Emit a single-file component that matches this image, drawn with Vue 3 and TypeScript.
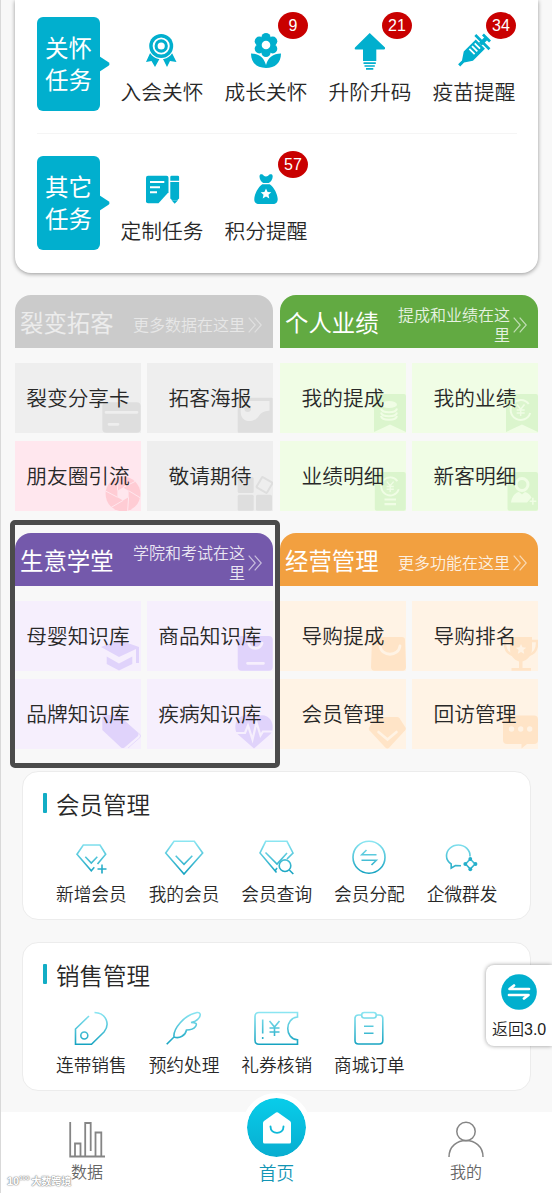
<script setup lang="ts">
interface Task { label: string; icon: string; badge?: number }
interface TaskRow { tag: [string, string]; tasks: Task[] }
interface Cell { label: string; icon: string; pink?: boolean }
interface Group { title: string; sub: string; theme: string; cells: Cell[] }
interface Section { title: string; items: { label: string; icon: string }[] }

const taskRows: TaskRow[] = [
  {
    tag: ['关怀', '任务'],
    tasks: [
      {
        label: '入会关怀',
        icon: '<path d="M11 21 6 32l5.500-1L15 37l5-9h2.500l4.500 9 3-6 6.500 1L31 21z"/><circle cx="21.200" cy="16" r="13.200" fill="#fff"/><circle cx="21.200" cy="16" r="12"/><circle cx="21.200" cy="16" r="7.600" fill="none" stroke="#fff" stroke-width="1.900"/><circle cx="21.200" cy="16" r="3.600" fill="#fff"/>',
      },
      {
        label: '成长关怀',
        badge: 9,
        icon: '<circle cx="22" cy="7.500" r="4.600"/><circle cx="28.700" cy="11.200" r="4.600"/><circle cx="28.700" cy="18.800" r="4.600"/><circle cx="22" cy="22.500" r="4.600"/><circle cx="15.300" cy="18.800" r="4.600"/><circle cx="15.300" cy="11.200" r="4.600"/><circle cx="22" cy="15" r="7"/><circle cx="22" cy="15" r="4.300" fill="#fff"/><path d="M7 23.500c8 0 13 4 15 11.500 2-7.500 7-11.500 15-11.500C37 33 31 38 22 38S7 33 7 23.500z"/>',
      },
      {
        label: '升阶升码',
        badge: 21,
        icon: '<path d="M21.700 3 37 17.500q.5 2-1 2h-7.700V31H15V19.500H7.500q-1.500-.2-.5-2z"/><path d="M15.500 32.300h12.300v1.700H15.500zM16.500 35.300h10.300v1.500H16.500zM18 38h7.300v1.700H18z"/>',
      },
      {
        label: '疫苗提醒',
        badge: 34,
        icon: '<g transform="translate(21.300 21.200) rotate(45)"><path d="M-6.500-10h13V7L1.500 14.500V20h-3v-5.500L-6.500 7z"/><path d="M-10-14.200h20v2.700h-20zM-2-18h4v8h-4zM-5-20H5v2.700H-5z"/><path d="M-4.500-6.500h7.500M-4.500-2.700h7.500M-4.500 1.100h7.500" stroke="#fff" stroke-width="1.800"/></g>',
      },
    ],
  },
  {
    tag: ['其它', '任务'],
    tasks: [
      {
        label: '定制任务',
        icon: '<path d="M8 6.700h18.500q2 0 2 2v14.600L18.500 34.300H8q-2 0-2-2V8.700q0-2 2-2z"/><path d="M10 13h14.300M10 18.300h10M10 23.300h7" stroke="#fff" stroke-width="2"/><path d="M30.300 8q0-1.300 1.300-1.300h6.200q1.300 0 1.300 1.300v3.700h-8.800zM30.300 13h8.800v16.500l-1.600 1.600h-5.600l-1.600-1.600zM31.500 31.300h6.500l-3.300 3.500z"/>',
      },
      {
        label: '积分提醒',
        badge: 57,
        icon: '<path d="M15.500 7.500c0-3 3-2.500 4.300-.8 1.200 1 3 1 4.400 0 1.300-1.700 4.600-2.200 4.500.8 0 3-2 5.300-4 6.500h-5.400c-2-1.200-3.800-3.500-3.800-6.500z"/><path d="M18.300 15.300h7.400C30 18.300 33.500 25 33.700 30c.1 3-1.700 5-4.700 5H15c-3 0-4.900-2-4.700-5 .2-5 3.700-11.700 8-14.700z"/><path d="m22 19.500 1.600 3.400 3.700.4-2.800 2.500.8 3.700-3.300-1.900-3.300 1.900.8-3.700-2.800-2.500 3.700-.4z" fill="#fff"/>',
      },
    ],
  },
]

const ribbon = '<path d="M13.500 5H42q2 0 2 2v36L28 35.500 12 43V7q0-2 1.500-2z"/>'
const yen = (x: number, y: number, s: number) =>
  `<g transform="translate(${x} ${y}) scale(${s})" fill="none" stroke="var(--cell)" stroke-width="2"><path d="M8-6A10 10 0 1 0 9.500 3M8 6.500"/><path d="M-3.800-5.500 0-.8l3.800-4.700M0-.8V6M-4 0h8M-4 3h8" stroke-width="1.500"/></g>`

const groups: Group[] = [
  {
    title: '裂变拓客', sub: '更多数据在这里', theme: 'gray',
    cells: [
      { label: '裂变分享卡', icon: '<rect x="5.300" y="13.300" width="38.400" height="30.400" rx="4"/><path d="M9 23.300h31M12 35.300h9" stroke="var(--cell)" stroke-width="2.800" stroke-linecap="round"/>' },
      { label: '拓客海报', icon: '<rect x="8.700" y="8.700" width="35" height="35" rx="1"/><path d="M14 12h26.500v9.500c-7 1-8.500 2.500-11 6-3 4.500-11 6.500-15.500 2-3.500-4-2-9.500-2-15.500q0-2 2-2z" fill="var(--cell)"/><circle cx="18.700" cy="19.500" r="3.400"/>' },
      { label: '朋友圈引流', pink: true, icon: '<circle cx="26" cy="27" r="17.400"/><path d="m26 20.500 5.600 3.200v6.500L26 33.500l-5.600-3.300v-6.500z" fill="var(--cell)"/><path d="m26 20.500 12-6M31.600 23.700l11.500 7M31.600 30.200l-1 14M26 33.500l-12 7M20.400 30.200l-11.500-6M20.400 23.700l.8-14" stroke="var(--cell)" stroke-width="1"/>' },
      { label: '敬请期待', icon: '<rect x="8.700" y="10" width="16" height="16" rx="1.500"/><rect x="8.700" y="27.800" width="16" height="16" rx="1.500"/><rect x="27" y="27.800" width="16" height="16" rx="1.500"/><rect x="29.500" y="12" width="12" height="12" rx="1" fill="none" stroke="currentColor" stroke-width="2" transform="rotate(30 35.500 18)"/>' },
    ],
  },
  {
    title: '个人业绩', sub: '提成和业绩在这里', theme: 'green',
    cells: [
      { label: '我的提成', icon: ribbon + '<ellipse cx="27" cy="15.500" rx="8" ry="3.600" fill="var(--cell)"/><path d="M19 19.500c1 5 15 5 16 0M19 23.500c1 5 15 5 16 0M19 27c1 5 15 5 16 0" fill="none" stroke="var(--cell)" stroke-width="2"/>' },
      { label: '我的业绩', icon: ribbon + yen(26.7, 21, 1) },
      { label: '业绩明细', icon: '<rect x="12.800" y="5" width="31" height="38.700" rx="2"/>' + yen(28.2, 19.5, 0.9) + '<path d="M22.500 32.500h11.500M22.500 37.200h11.500" stroke="var(--cell)" stroke-width="2.200"/>' },
      { label: '新客明细', icon: '<rect x="13.500" y="5" width="30.500" height="38.700" rx="2"/><circle cx="28" cy="17.500" r="6" fill="none" stroke="var(--cell)" stroke-width="3"/><path d="M17 35.500c1-7 5-10 8-10.500l3 2.500 3-2.500c3 .7 5 2.500 6.500 5.500l-4.500 5zM35.700 33.500h2.400v-2.800h1.500v2.800h2.700V35h-2.700v2.700h-1.500V35h-2.400z" fill="var(--cell)"/>' },
    ],
  },
  {
    title: '生意学堂', sub: '学院和考试在这里', theme: 'purple',
    cells: [
      { label: '母婴知识库', icon: '<path d="m4 20 18-7 20 7v16h-3V22L22 30zM9.700 29.500 22 36.500l13.300-7v7.500L22 43.500 9.700 37z"/>' },
      { label: '商品知识库', icon: '<rect x="8.700" y="9" width="35" height="34.700" rx="4"/><path d="M19.500 16a7 7 0 0 0 13.600 0M18.500 36.300h16" fill="none" stroke="var(--cell)" stroke-width="2.700" stroke-linecap="round"/>' },
      { label: '品牌知识库', icon: '<path d="M7 10h14.500L41 28q1 1.500 0 3L27.500 42.500q-1.800 1-3.500 0L5.300 25V12q0-2 1.700-2z"/><path d="M29 17.500 43 29.500q1 1.500 0 3L31 43" fill="none" stroke="currentColor" stroke-width=".7"/>' },
      { label: '疾病知识库', icon: '<path d="M25 43.500 8.500 29C5 25 5.500 15 12 11.500c5-2.500 10-.5 13 2.500 3-3 8-5 13-2.500C44.500 15 45 25 41.500 29z"/><path d="M7 28h9l3-7.500 4.500 14 4-17 4 13 2.500-4H43" fill="none" stroke="var(--cell)" stroke-width="2.200"/>' },
    ],
  },
  {
    title: '经营管理', sub: '更多功能在这里', theme: 'orange',
    cells: [
      { label: '导购提成', icon: '<path d="M13 10h27q3 0 3 3l1 27q0 3.700-3.500 3.700h-28Q9 43.700 9 40l1-27q0-3 3-3z"/><path d="M18 19c1.500 11 18.500 11 20 0" fill="none" stroke="var(--cell)" stroke-width="2.800" stroke-linecap="round"/>' },
      { label: '导购排名', icon: '<path d="M16 10h22v12c0 7-5 11-9.500 12.500V41H37v2.700H17.500V41H25v-6.500C20.500 33 16 29 16 22z"/><path d="M17 14h-6c-.5 7 2 12.500 8 14M37 14h6c.5 7-2 12.500-8 14" fill="none" stroke="currentColor" stroke-width="2.500"/><path d="m27 17 1.500 3.300 3.700.4-2.800 2.400.8 3.600-3.200-1.800-3.200 1.800.8-3.600-2.800-2.400 3.700-.4z" fill="var(--cell)"/>' },
      { label: '会员管理', icon: '<path d="M15 12h20q1.500 0 2.500 1.200l6 9.300q.7 1.500-.3 2.800L27.300 42.500q-2 1.800-4 0L7.300 25.300q-1-1.300-.2-2.800l5.500-9.300Q13.500 12 15 12z"/><path d="m16.500 27 9 7.500 9-7.500" fill="none" stroke="var(--cell)" stroke-width="2.600" stroke-linecap="round"/>' },
      { label: '回访管理', icon: '<path d="M13 10.500h27q4 0 4 4V35q0 4-4 4h-7l-5.500 4.500V39H13q-4 0-4-4V14.500q0-4 4-4z"/><g fill="var(--cell)"><circle cx="17.500" cy="24" r="2.700"/><circle cx="26.700" cy="24" r="2.700"/><circle cx="35.700" cy="24" r="2.700"/></g>' },
    ],
  },
]

const sections: Section[] = [
  {
    title: '会员管理',
    items: [
      { label: '新增会员', icon: '<path d="M26.500 27 34.700 17.300 29 8H12.300L6 17.300l14.300 16.500 3-3.500M14.300 19.700l6 6.300 6-6.300M31 27.500v9M26.500 32h9"/>' },
      { label: '我的会员', icon: '<path d="M10 4.300h20.300L38.700 16 20 37 1.700 16zM11.700 18.700l8.300 8.600 8.300-8.600"/>' },
      { label: '会员查询', icon: '<path d="m30 22 6-6-6-11.700H8.700L3 16l16.500 19.500M8.500 15.500 20 27l10-11M20 31l-2 3"/><circle cx="28" cy="28.700" r="5.800"/><path d="m32.300 33 4 4"/>' },
      { label: '会员分配', icon: '<circle cx="20" cy="20.200" r="16"/><path d="M27.500 17.700H12.800L17.500 13M12.500 23.300h14.800L22.500 28"/>' },
      { label: '企微群发', icon: '<path d="M28 19.500C28.500 13 23 8 16.300 8S4.500 13 4.500 19c0 3.500 1.700 6 4.700 8v4l4.300-2.500 5.500.3"/><path d="m28.300 22 4.700 5-4.700 5-4.700-5z"/><g fill="#25afca" stroke="none"><circle cx="28.300" cy="22" r="1.900"/><circle cx="33.500" cy="27" r="1.900"/><circle cx="28.300" cy="32.300" r="1.900"/><circle cx="23.300" cy="27" r="1.900"/></g>' },
    ],
  },
  {
    title: '销售管理',
    items: [
      { label: '连带销售', icon: '<path d="M18 8 4.500 21v15.200H20.500L33 24C39 17 36 5 23.500 4.500"/><circle cx="13.300" cy="27.500" r="3.500"/>' },
      { label: '预约处理', icon: '<path d="M2.700 36.300 10 29M10 29C9 21 20 7 33 4.500c4-.5 4.200 3.500 1 6.500-2 2.500-4.500 3-7 3.500 5 0 6.500 1 4.500 4-2.500 3.500-5.500 3.500-9 3.500-1 5.500-7 9-12.500 7z"/>' },
      { label: '礼券核销', icon: '<path d="M40.500 4.500H2q-4 0-4 4v23.700q0 4 4 4h38.500v-4.500c-13-1-13-21.500 0-22.700z"/><path d="M5.700 11.500v14M5.700 29v2M12.500 13l5 6 5-6M17.500 19v9M12.500 20h10M12.500 24h10"/>' },
      { label: '商城订单', icon: '<path d="M12.500 7H9.500Q6 7 6 10.500v22Q6 36 9.500 36h20.800q3.500 0 3.500-3.500v-22Q33.800 7 30.300 7h-3M15 18.300h9.500M15 25.300h9.500"/><rect x="12.700" y="4.500" width="14.500" height="5.500" rx="2.500"/>' },
    ],
  },
]
</script>

<template>
  <main class="page">
    <svg class="defs" width="0" height="0">
      <defs>
        <linearGradient id="aqua" gradientUnits="userSpaceOnUse" x1="0" y1="4" x2="0" y2="37">
          <stop offset="0" stop-color="#8ce6f2" />
          <stop offset="1" stop-color="#14a2c0" />
        </linearGradient>
      </defs>
    </svg>

    <section class="panel">
      <div v-for="row in taskRows" :key="row.tag[0]" class="task-row">
        <div class="tag">
          <span v-for="t in row.tag" :key="t">{{ t }}</span>
          <svg class="tip" viewBox="0 0 11 16" width="11" height="16"><path d="M0 0 9.500 6.200q2 1.800 0 3.600L0 16z" fill="#01afce" /></svg>
        </div>
        <div v-for="task in row.tasks" :key="task.label" class="task">
          <svg viewBox="0 0 44 40" width="44" height="40" v-html="task.icon"></svg>
          <span class="task-label">{{ task.label }}</span>
          <b v-if="task.badge" class="badge">{{ task.badge }}</b>
        </div>
      </div>
    </section>

    <section class="groups">
      <article v-for="g in groups" :key="g.title" class="group" :class="g.theme">
        <header class="group-head">
          <h2>{{ g.title }}</h2>
          <p>{{ g.sub }}</p>
          <svg viewBox="0 0 14 16" width="14" height="16"><path d="m.7.700 6.500 7.300-6.500 7.300M6.700.700l6.500 7.300-6.500 7.300" fill="none" stroke="currentColor" stroke-width="1.200" /></svg>
        </header>
        <div class="cells">
          <div v-for="c in g.cells" :key="c.label" class="cell" :class="{ pink: c.pink }">
            <svg viewBox="0 0 44 44" width="44" height="44" v-html="c.icon"></svg>
            <span>{{ c.label }}</span>
          </div>
        </div>
      </article>
      <div class="highlight"></div>
    </section>

    <section v-for="s in sections" :key="s.title" class="card">
      <h3>{{ s.title }}</h3>
      <div class="links">
        <div v-for="i in s.items" :key="i.label" class="link">
          <svg viewBox="0 0 40 40" width="40" height="40" v-html="i.icon"></svg>
          <span>{{ i.label }}</span>
        </div>
      </div>
    </section>

    <aside class="switch">
      <svg viewBox="0 0 36 36" width="36" height="36">
        <circle cx="18" cy="18" r="17.800" fill="#01afce" />
        <path d="M28 15H8.500l4.500-3.500M8 21h19.500L23 24.500" fill="none" stroke="#fff" stroke-width="2.700" stroke-linecap="round" stroke-linejoin="round" />
      </svg>
      <span>返回3.0</span>
    </aside>

    <nav class="tabs">
      <div class="tab">
        <svg viewBox="0 0 36 36" width="36" height="36" fill="none" stroke="#858585" stroke-width="1.800">
          <path d="M1.200 0v34.500H36M6 34V21.500h5.500V34M16.200 34V1h5.500v28M26.500 34V10.500h5.800V34" />
        </svg>
        <span>数据</span>
      </div>
      <div class="tab home">
        <div class="orb">
          <svg viewBox="0 0 30 32" width="30" height="32">
            <path d="M14 .500q1-.6 2 0L28 9q1 .8 1 2v19q0 1.500-1.500 1.500h-25Q1 31.500 1 30V11q0-1.200 1-2z" fill="#fff" />
            <path d="M8.500 14.500c0 8.500 13 8.500 13 0" fill="none" stroke="#0fb9d8" stroke-width="1.900" stroke-linecap="round" />
          </svg>
        </div>
        <span>首页</span>
      </div>
      <div class="tab">
        <svg viewBox="0 0 36 36" width="36" height="36" fill="none" stroke="#858585" stroke-width="1.500">
          <circle cx="18" cy="9.500" r="9.200" />
          <path d="M1 35c0-22 34-22 34 0" />
        </svg>
        <span>我的</span>
      </div>
      <div class="mark"><b>10<sup>100</sup></b><span>大数跨境</span></div>
    </nav>
  </main>
</template>

<style>
body {
  background: #fff;
  overflow: hidden;
}
</style>

<style scoped>
.page {
  position: relative;
  box-sizing: border-box;
  width: 552px;
  height: 1193px;
  border-left: 1px solid #d9d9d9;
  background: #f8f8f8;
  color: #282828;
  font-family: "Liberation Sans", "Noto Sans CJK SC", sans-serif;
  font-weight: 350;
  overflow: hidden;
}
.defs { position: absolute; }
svg { display: block; overflow: visible; }
h2, h3, p { margin: 0; font-weight: inherit; }

.panel {
  box-sizing: border-box;
  width: 523px;
  height: 273px;
  margin-left: 14px;
  padding: 17px 21px 0 22px;
  border-radius: 0 0 16px 16px;
  background: #fff;
  box-shadow: 0 1px 4px rgba(0, 0, 0, 0.4);
}
.task-row { display: flex; height: 94px; }
.task-row + .task-row {
  margin-top: 22px;
  padding-top: 22px;
  border-top: 1px solid #f5f5f5;
}
.tag {
  position: relative;
  display: flex;
  flex: none;
  flex-direction: column;
  align-items: center;
  justify-content: center;
  box-sizing: border-box;
  width: 63px;
  padding-top: 2px;
  margin-right: 10px;
  border-radius: 6px;
  background: #01afce;
  color: #fff;
  font-size: 23.5px;
  font-weight: 400;
  line-height: 32.5px;
}
.tip { position: absolute; left: 62px; top: 39px; }
.task {
  position: relative;
  display: flex;
  flex: none;
  flex-direction: column;
  align-items: center;
  width: 104px;
  padding-top: 13px;
  box-sizing: border-box;
}
.task svg { fill: #01afce; }
.task-label { margin-top: 8.5px; font-size: 20.7px; line-height: 28px; white-space: nowrap; }
.badge {
  position: absolute;
  left: 64px;
  top: -5px;
  width: 30px;
  height: 27px;
  border-radius: 50%;
  background: #c90000;
  color: #fff;
  font-size: 16px;
  font-weight: 400;
  line-height: 27px;
  text-align: center;
}

.groups {
  position: relative;
  display: grid;
  grid-template-columns: 258px 258px;
  gap: 22px 7px;
  margin: 22px 0 0 14px;
}
.group-head {
  display: flex;
  align-items: center;
  box-sizing: border-box;
  height: 53px;
  padding: 6px 11px 0 5px;
  border-radius: 16px 16px 0 0;
  background: var(--head);
  color: #fff;
}
.group-head h2 { flex: none; font-size: 23.4px; font-weight: 400; line-height: 53px; }
.group-head p {
  flex: 1;
  margin: 3px 3px 0 18px;
  font-size: 16px;
  line-height: 20px;
  text-align: right;
  opacity: 0.85;
}
.group-head svg { flex: none; margin-top: 1px; opacity: 0.6; }
.cells {
  display: grid;
  grid-template-columns: 126px 126px;
  grid-auto-rows: 70.5px;
  gap: 7.5px 6px;
  margin-top: 14.5px;
}
.cell {
  position: relative;
  display: flex;
  align-items: center;
  justify-content: center;
  background: var(--cell);
  font-size: 20.7px;
  white-space: nowrap;
}
.cell svg { position: absolute; right: 0; bottom: 0; overflow: hidden; color: var(--ink); fill: currentColor; }
.cell span { position: relative; padding-top: 3px; line-height: 30px; }
.gray { --head: #cbcbcb; --cell: #eee; --ink: #dedede; }
.gray .group-head { color: #ececec; }
.gray .pink { --cell: #ffe7ee; --ink: #ffccd4; }
.green { --head: #62aa42; --cell: #f0fde5; --ink: #dbf5cd; }
.purple { --head: #7459ab; --cell: #f6effd; --ink: #e0d3fb; }
.orange { --head: #f2a040; --cell: #fff3e5; --ink: #ffe4c7; }
.highlight {
  position: absolute;
  left: -5px;
  top: 225px;
  box-sizing: border-box;
  width: 270px;
  height: 248px;
  border: 5px solid #4b4b4b;
  border-radius: 5px;
}

.card {
  box-sizing: border-box;
  width: 509px;
  height: 149px;
  margin: 22px 0 0 21px;
  padding: 15px 0 0 20px;
  border: 1px solid #ececec;
  border-radius: 16px;
  background: #fff;
}
.card h3 {
  display: flex;
  align-items: center;
  height: 34px;
  font-size: 23.5px;
}
.card h3::before {
  content: "";
  width: 4px;
  height: 20px;
  margin: -2px 9px 0 0;
  border-radius: 1px;
  background: #12adc5;
}
.links { display: flex; margin: 16px 0 0 2px; }
.link {
  display: flex;
  flex-direction: column;
  align-items: center;
  width: 92.7px;
  font-size: 17.7px;
  line-height: 26px;
}
.link svg { fill: none; stroke: url(#aqua); stroke-width: 1.6; }
.link span { margin-top: 5px; }

.switch {
  position: absolute;
  right: 0;
  top: 965px;
  box-sizing: border-box;
  width: 66px;
  height: 81px;
  padding: 9px 0 0 6px;
  border-radius: 8px 0 0 8px;
  background: #fff;
  box-shadow: 0 0 4px rgba(0, 0, 0, 0.4);
  color: #222;
  font-size: 16px;
  line-height: 24px;
  white-space: nowrap;
}
.switch svg { margin: 0 0 8px 9px; }

.tabs {
  position: absolute;
  left: 0;
  right: 0;
  bottom: 0;
  display: flex;
  justify-content: space-between;
  box-sizing: border-box;
  height: 81px;
  padding: 10px 56px 0;
  background: #fff;
  color: #666;
  font-size: 16px;
}
.tab {
  display: flex;
  flex-direction: column;
  align-items: center;
  width: 60px;
  line-height: 26px;
}
.tab > span { margin-top: 2px; }
.home { color: #1295b4; font-size: 17.7px; }
.orb {
  display: flex;
  align-items: center;
  justify-content: center;
  flex: none;
  width: 59px;
  height: 59px;
  margin-top: -29px;
  border: 5px solid #fff;
  border-radius: 50%;
  background: linear-gradient(#08cdea, #08add0) padding-box;
}
.home > span { margin-top: -1px; }
.mark {
  position: absolute;
  left: 6px;
  bottom: 5px;
  display: flex;
  align-items: center;
  gap: 2px;
  color: #fff;
  font-size: 11px;
  line-height: 13px;
  text-shadow: 0 0 1px #888, 0 0 1px #888, 0 0 2px #aaa;
  white-space: nowrap;
}
.mark sup { font-size: 6px; line-height: 0; }
.mark span { font-size: 10px; font-weight: 700; }
</style>
